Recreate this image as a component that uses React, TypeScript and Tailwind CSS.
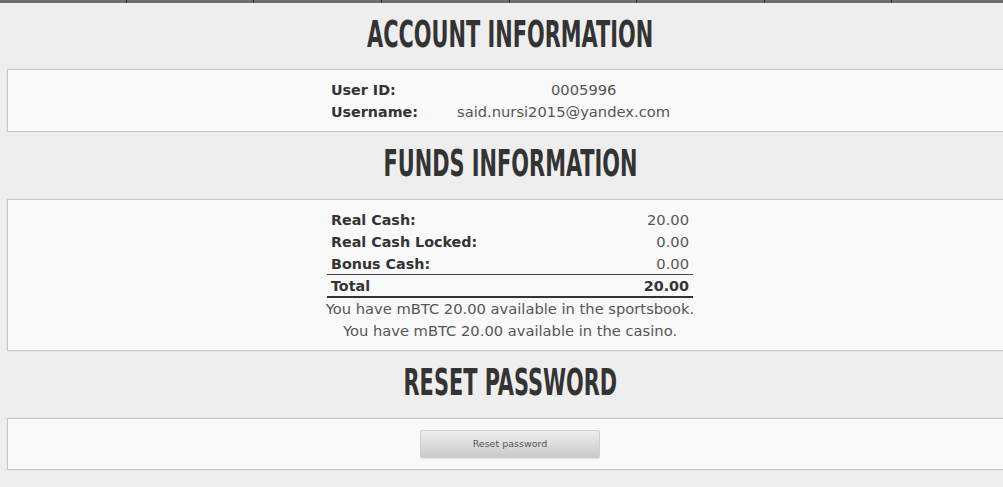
import React from "react";

const body = { fontFamily: '"DejaVu Sans", Verdana, sans-serif' };

function Heading({ children, first = false }: { children: React.ReactNode; first?: boolean }) {
  return (
    <div className={`${first ? "h-[66px]" : "h-[67px]"} pb-[4px] flex items-center justify-center`}>
      <span
        className="inline-block origin-center scale-x-[0.627] text-[37px] leading-none font-bold text-[#333]"
        style={{ fontFamily: '"DejaVu Sans Condensed", "DejaVu Sans", sans-serif' }}
      >
        {children}
      </span>
    </div>
  );
}

function Panel({ children, className = "" }: { children: React.ReactNode; className?: string }) {
  return (
    <div className={`ml-[7px] mr-[7px] border border-[#c8c8c8] bg-[#f9f9f9] shadow-[0_0_1px_rgba(0,0,0,0.15)] ${className}`}>
      {children}
    </div>
  );
}

export default function App() {
  const tabs = Array.from({ length: 8 });
  return (
    <div className="w-full min-h-[487px] overflow-hidden bg-[#eeeeee]" style={body}>
      <div className="w-[1020px]">
        <div className="flex h-[3px] bg-[#6e6e6e] -ml-[1px]">
          {tabs.map((_, i) => (
            <div key={i} className="w-[128px] h-[3px] border-r border-[#2a2a2a]" />
          ))}
        </div>

        <Heading first>ACCOUNT INFORMATION</Heading>
        <Panel className="pt-[9px] pb-[8px]">
          <div className="w-[366px] mx-auto leading-[22px]">
            <div className="flex">
              <div className="w-[126px] pl-[4px] font-bold text-[14.3px] text-[#333]">User ID:</div>
              <div className="pl-[98px] text-[14.7px] text-[#555]">0005996</div>
            </div>
            <div className="flex">
              <div className="w-[126px] pl-[4px] font-bold text-[14.3px] text-[#333]">Username:</div>
              <div className="pl-[4px] text-[14.7px] text-[#555]">said.nursi2015@yandex.com</div>
            </div>
          </div>
        </Panel>

        <Heading>FUNDS INFORMATION</Heading>
        <Panel className="pt-[9px] pb-[8px]">
          <div className="w-[366px] mx-auto leading-[22px]">
            <div className="flex justify-between px-[4px]">
              <span className="font-bold text-[14.3px] text-[#333]">Real Cash:</span>
              <span className="text-[14.7px] text-[#555]">20.00</span>
            </div>
            <div className="flex justify-between px-[4px]">
              <span className="font-bold text-[14.3px] text-[#333]">Real Cash Locked:</span>
              <span className="text-[14.7px] text-[#555]">0.00</span>
            </div>
            <div className="flex justify-between px-[4px] h-[22px] border-b border-[#444]">
              <span className="font-bold text-[14.3px] text-[#333]">Bonus Cash:</span>
              <span className="text-[14.7px] text-[#555]">0.00</span>
            </div>
            <div className="flex justify-between px-[4px] h-[23px] border-b-2 border-[#333]">
              <span className="font-bold text-[14.3px] text-[#333]">Total</span>
              <span className="font-bold text-[14.3px] text-[#333]">20.00</span>
            </div>
          </div>
          <div className="text-center text-[14.7px] leading-[22px] text-[#555]">
            <div>You have mBTC 20.00 available in the sportsbook.</div>
            <div>You have mBTC 20.00 available in the casino.</div>
          </div>
        </Panel>

        <Heading>RESET PASSWORD</Heading>
        <Panel className="py-[11px] flex justify-center">
          <button className="w-[180px] h-[28px] rounded-[2px] border border-[#cfcfcf] bg-gradient-to-b from-[#efefef] to-[#c9c9c9] text-[9.5px] text-[#555] shadow-[0_1px_1px_rgba(0,0,0,0.1)]">
            Reset password
          </button>
        </Panel>
      </div>
    </div>
  );
}
